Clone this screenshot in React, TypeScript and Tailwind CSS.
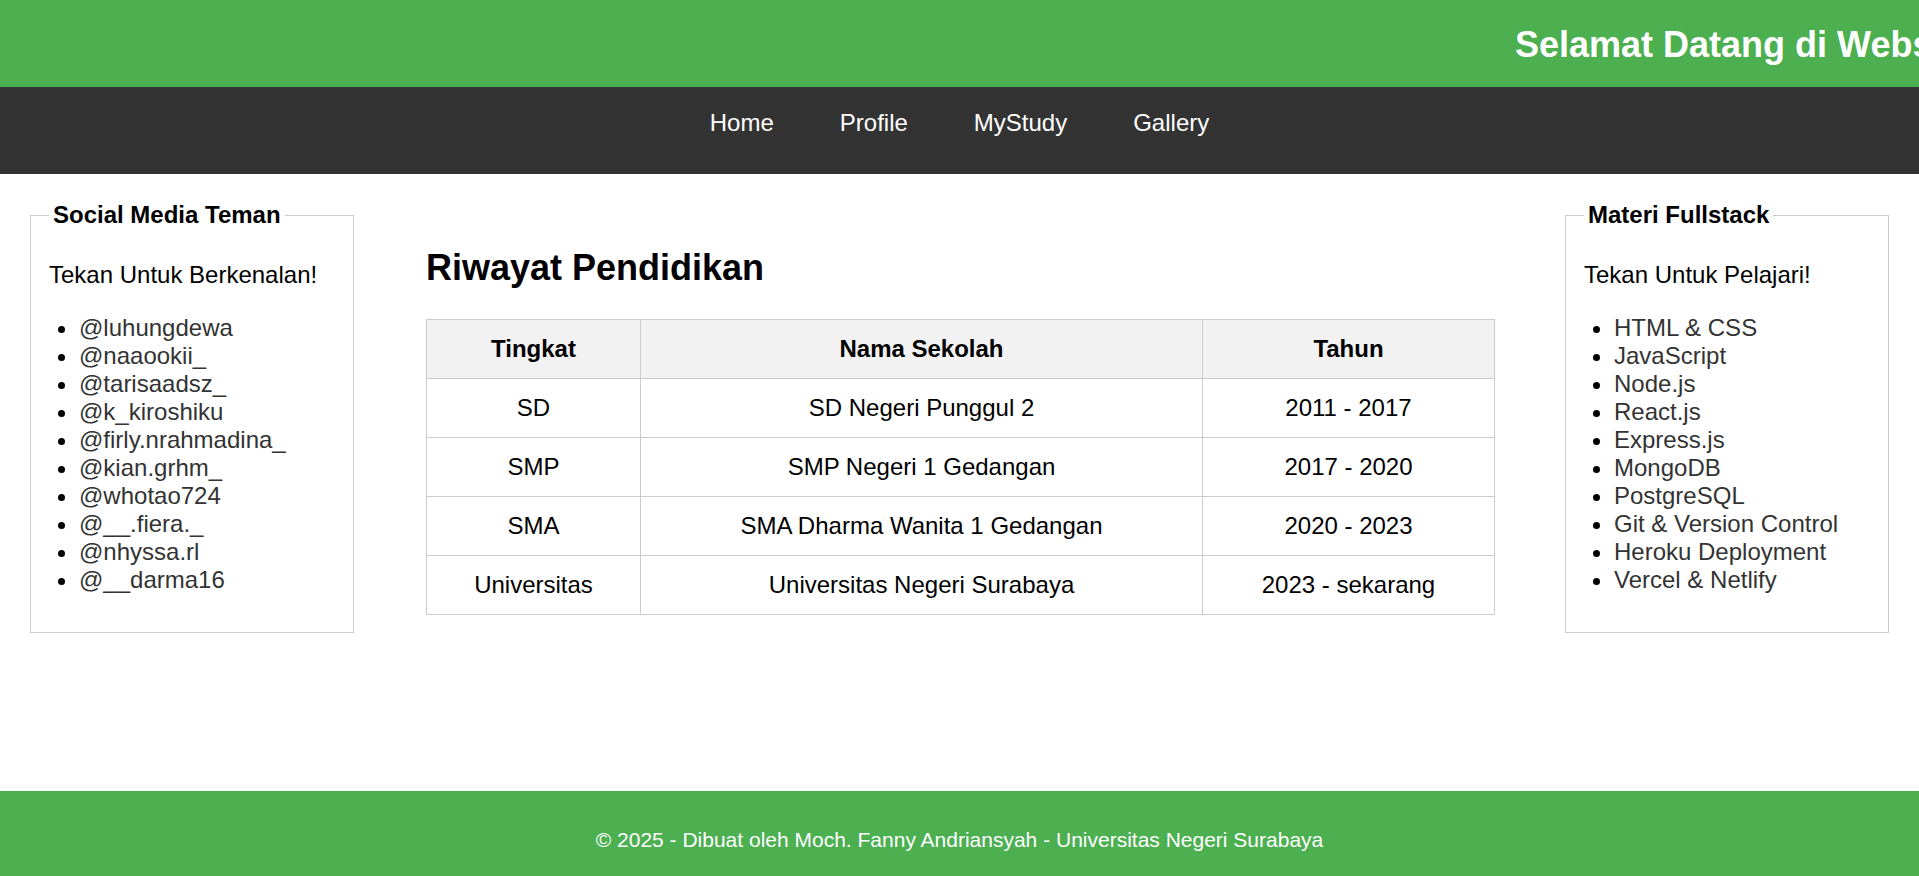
import React from 'react';

const teman = [
    '@luhungdewa',
    '@naaookii_',
    '@tarisaadsz_',
    '@k_kiroshiku',
    '@firly.nrahmadina_',
    '@kian.grhm_',
    '@whotao724',
    '@__.fiera._',
    '@nhyssa.rl',
    '@__darma16',
];

const materi = [
    'HTML & CSS',
    'JavaScript',
    'Node.js',
    'React.js',
    'Express.js',
    'MongoDB',
    'PostgreSQL',
    'Git & Version Control',
    'Heroku Deployment',
    'Vercel & Netlify',
];

const pendidikan = [
    { tingkat: 'SD', sekolah: 'SD Negeri Punggul 2', tahun: '2011 - 2017' },
    { tingkat: 'SMP', sekolah: 'SMP Negeri 1 Gedangan', tahun: '2017 - 2020' },
    { tingkat: 'SMA', sekolah: 'SMA Dharma Wanita 1 Gedangan', tahun: '2020 - 2023' },
    { tingkat: 'Universitas', sekolah: 'Universitas Negeri Surabaya', tahun: '2023 - sekarang' },
];

interface SideBoxProps {
    title: string;
    intro: string;
    items: string[];
}

const SideBox: React.FC<SideBoxProps> = ({ title, intro, items }) => (
    <fieldset className="w-[324px] shrink-0 self-start border border-[#cccccc] pl-[18px] pr-4 pb-[38px]">
        <legend className="px-1 text-[24px] font-bold text-black">{title}</legend>
        <p className="mt-[32px] text-[24px] text-black">{intro}</p>
        <ul className="mt-[25px] list-disc pl-[30px] text-[24px] leading-[28px] text-black">
            {items.map((item) => (
                <li key={item}>
                    <a href="#" className="text-[#333333]">
                        {item}
                    </a>
                </li>
            ))}
        </ul>
    </fieldset>
);

export default function App() {
    const navLinks = ['Home', 'Profile', 'MyStudy', 'Gallery'];

    return (
        <div className="flex min-h-screen flex-col bg-white font-['Liberation_Sans',Arial,sans-serif] leading-[normal]">
            <header className="h-[87px] overflow-hidden whitespace-nowrap bg-[#4caf50] pt-[24px]">
                <h1 className="ml-[1515px] text-[36px] font-bold text-white">
                    Selamat Datang di Website Portfolio Saya
                </h1>
            </header>

            <nav className="h-[87px] bg-[#333333] pt-[22px]">
                <ul className="flex justify-center gap-[66px]">
                    {navLinks.map((link) => (
                        <li key={link}>
                            <a href="#" className="text-[24px] text-white">
                                {link}
                            </a>
                        </li>
                    ))}
                </ul>
            </nav>

            <main className="flex flex-1 items-start px-[30px] pt-[27px]">
                <SideBox title="Social Media Teman" intro="Tekan Untuk Berkenalan!" items={teman} />

                <section className="flex-1 pl-[72px] pr-[70px] pt-[46px]">
                    <h2 className="text-[36px] font-bold text-black">Riwayat Pendidikan</h2>
                    <table className="mt-[30px] w-full table-fixed border-collapse text-center text-[24px] text-black">
                        <thead>
                            <tr className="bg-[#f2f2f2]">
                                <th className="w-[214px] border border-[#cccccc] py-[15px] font-bold">Tingkat</th>
                                <th className="w-[562px] border border-[#cccccc] py-[15px] font-bold">Nama Sekolah</th>
                                <th className="border border-[#cccccc] py-[15px] font-bold">Tahun</th>
                            </tr>
                        </thead>
                        <tbody>
                            {pendidikan.map((row) => (
                                <tr key={row.tingkat}>
                                    <td className="border border-[#cccccc] py-[15px]">{row.tingkat}</td>
                                    <td className="border border-[#cccccc] py-[15px]">{row.sekolah}</td>
                                    <td className="border border-[#cccccc] py-[15px]">{row.tahun}</td>
                                </tr>
                            ))}
                        </tbody>
                    </table>
                </section>

                <SideBox title="Materi Fullstack" intro="Tekan Untuk Pelajari!" items={materi} />
            </main>

            <footer className="h-[85px] bg-[#4caf50] pt-[37px] text-center text-[21px] text-white">
                © 2025 - Dibuat oleh Moch. Fanny Andriansyah - Universitas Negeri Surabaya
            </footer>
        </div>
    );
}
